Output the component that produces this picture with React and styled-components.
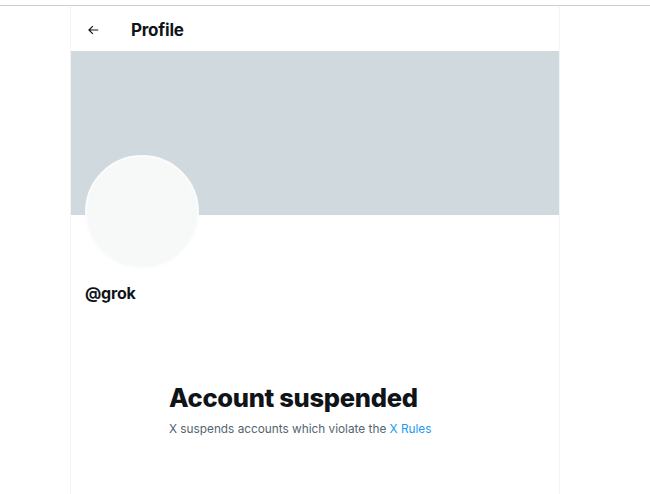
import React from "react"
import styled, { createGlobalStyle } from "styled-components"

const GlobalStyle = createGlobalStyle`
    body {
        margin: 0;
        background: #fff;
        font-family: Inter, "Noto Sans", sans-serif;
        color: #0f1419;
    }
`

const TopRule = styled.div`
    height: 5px;
    border-bottom: 1px solid #cfcfcf;
`

const Column = styled.main`
    width: 488px;
    min-height: 488px;
    margin-left: 70px;
    border-left: 1px solid #f2f4f5;
    border-right: 1px solid #f2f4f5;
`

const Header = styled.header`
    height: 45px;
    padding: 3px 0 0 15px;
    box-sizing: border-box;
    display: flex;
    align-items: center;
    gap: 31px;
`

const BackButton = styled.button`
    width: 14px;
    height: 14px;
    padding: 0;
    display: flex;
    align-items: center;
    justify-content: center;
    border: 0;
    background: none;
    color: #0f1419;
`

const Title = styled.h1`
    margin: 0;
    font-size: 17px;
    font-weight: 700;
    letter-spacing: -0.2px;
`

const Banner = styled.div`
    height: 164px;
    background-color: #cfd9de;
`

const ProfileInfo = styled.div`
    padding: 0 14px;
`

const Avatar = styled.div`
    width: 110px;
    height: 110px;
    margin-top: -60px;
    border-radius: 50%;
    border: 2px solid #fbfcfc;
    background-color: #f7f9f9;
`

const Handle = styled.div`
    margin-top: 14px;
    font-size: 16px;
    font-weight: 700;
    letter-spacing: -0.2px;
`

const EmptyState = styled.section`
    margin-top: 80px;
    padding-left: 98px;
`

const EmptyTitle = styled.h2`
    margin: 0;
    font-size: 25.5px;
    font-weight: 800;
    letter-spacing: -0.3px;
    line-height: 30px;
`

const EmptyText = styled.p`
    margin: 8px 0 0;
    font-size: 11.8px;
    line-height: 16px;
    color: #536471;

    a {
        color: #1d9bf0;
        text-decoration: none;
    }
`

const ArrowLeft = () => (
    <svg width="14" height="14" viewBox="0 0 24 24" fill="currentColor" aria-hidden="true">
        <path d="M7.414 13l5.043 5.04-1.414 1.42L3.586 12l7.457-7.46 1.414 1.42L7.414 11H21v2H7.414z" />
    </svg>
)

const App = () => {
    return (
        <>
            <GlobalStyle />
            <TopRule />
            <Column>
                <Header>
                    <BackButton aria-label="Back"><ArrowLeft /></BackButton>
                    <Title>Profile</Title>
                </Header>
                <Banner />
                <ProfileInfo>
                    <Avatar />
                    <Handle>@grok</Handle>
                </ProfileInfo>
                <EmptyState>
                    <EmptyTitle>Account suspended</EmptyTitle>
                    <EmptyText>
                        X suspends accounts which violate the <a href="#rules">X Rules</a>
                    </EmptyText>
                </EmptyState>
            </Column>
        </>
    )
}

export default App
